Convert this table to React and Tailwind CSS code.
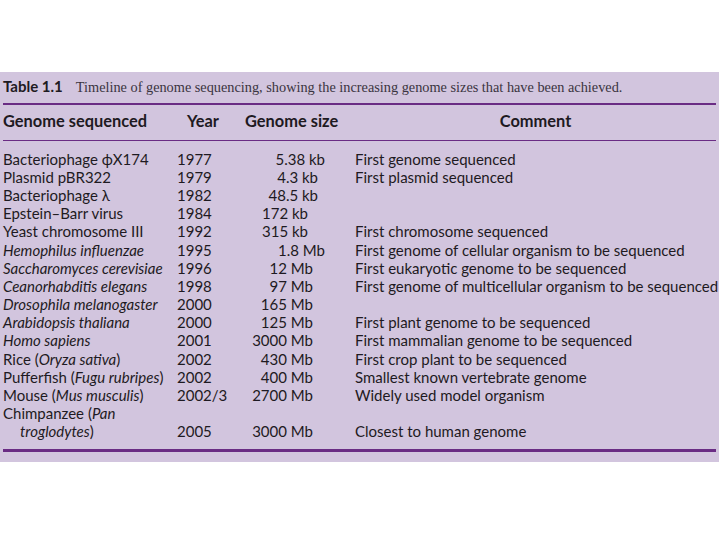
const rows = [
  { name: <>Bacteriophage ϕX174</>, year: '1977', size: '5.38 kb', pr: 'pr-[30px]', comment: 'First genome sequenced' },
  { name: <>Plasmid pBR322</>, year: '1979', size: '4.3 kb', pr: 'pr-[37px]', comment: 'First plasmid sequenced' },
  { name: <>Bacteriophage λ</>, year: '1982', size: '48.5 kb', pr: 'pr-[37px]', comment: '' },
  { name: <>Epstein–Barr virus</>, year: '1984', size: '172 kb', pr: 'pr-[47px]', comment: '' },
  { name: <>Yeast chromosome III</>, year: '1992', size: '315 kb', pr: 'pr-[47px]', comment: 'First chromosome sequenced' },
  { name: <i>Hemophilus influenzae</i>, year: '1995', size: '1.8 Mb', pr: 'pr-[30px]', comment: 'First genome of cellular organism to be sequenced' },
  { name: <i>Saccharomyces cerevisiae</i>, year: '1996', size: '12 Mb', pr: 'pr-[42px]', comment: 'First eukaryotic genome to be sequenced' },
  { name: <i>Ceanorhabditis elegans</i>, year: '1998', size: '97 Mb', pr: 'pr-[42px]', comment: 'First genome of multicellular organism to be sequenced' },
  { name: <i>Drosophila melanogaster</i>, year: '2000', size: '165 Mb', pr: 'pr-[42px]', comment: '' },
  { name: <i>Arabidopsis thaliana</i>, year: '2000', size: '125 Mb', pr: 'pr-[42px]', comment: 'First plant genome to be sequenced' },
  { name: <i>Homo sapiens</i>, year: '2001', size: '3000 Mb', pr: 'pr-[42px]', comment: 'First mammalian genome to be sequenced' },
  { name: <>Rice (<i>Oryza sativa</i>)</>, year: '2002', size: '430 Mb', pr: 'pr-[42px]', comment: 'First crop plant to be sequenced' },
  { name: <>Pufferfish (<i>Fugu rubripes</i>)</>, year: '2002', size: '400 Mb', pr: 'pr-[42px]', comment: 'Smallest known vertebrate genome' },
  { name: <>Mouse (<i>Mus musculis</i>)</>, year: '2002/3', size: '2700 Mb', pr: 'pr-[42px]', comment: 'Widely used model organism' },
]

function Row({ name, year, size, pr, comment }) {
  return (
    <div className="grid h-[18.2px] grid-cols-[174px_56px_122px_1fr] items-center whitespace-nowrap">
      <span>{name}</span>
      <span>{year}</span>
      <span className={`text-right ${pr}`}>{size}</span>
      <span>{comment}</span>
    </div>
  )
}

export default function App() {
  return (
    <div className="h-[540px] w-[720px] bg-white pt-[72px]">
      <div className="flex h-[390px] w-[719px] flex-col bg-[#d2c5de] pl-[3px] pr-[3px] text-[#1e1a22]" style={{ fontFamily: 'Lato, "Open Sans", sans-serif' }}>
        <div className="flex h-[31px] items-end gap-[13px] pb-[9px] whitespace-nowrap">
          <span className="text-[15px] font-bold leading-none">Table 1.1</span>
          <span className="text-[14.3px] leading-none text-[#3a3440]" style={{ fontFamily: '"Liberation Serif", serif' }}>
            Timeline of genome sequencing, showing the increasing genome sizes that have been achieved.
          </span>
        </div>
        <div className="h-[2px] bg-[#6a2c84]" />
        <div className="grid h-[35px] grid-cols-[184px_58px_110px_1fr] items-center pb-[2px] text-[16.4px] font-bold whitespace-nowrap">
          <span>Genome sequenced</span>
          <span>Year</span>
          <span>Genome size</span>
          <span className="text-center">Comment</span>
        </div>
        <div className="h-[1px] bg-[#6a2c84]" />
        <div className="flex flex-col pt-[9px] text-[15px] leading-none">
          {rows.map((r, i) => (
            <Row key={i} {...r} />
          ))}
          <div className="grid h-[18.2px] grid-cols-[174px_1fr] items-center whitespace-nowrap">
            <span>Chimpanzee (<i>Pan</i></span>
          </div>
          <div className="grid h-[18.2px] grid-cols-[174px_56px_122px_1fr] items-center whitespace-nowrap">
            <span className="pl-[17px]"><i>troglodytes</i>)</span>
            <span>2005</span>
            <span className="pr-[42px] text-right">3000 Mb</span>
            <span>Closest to human genome</span>
          </div>
        </div>
        <div className="mt-[8px] h-[3px] bg-[#6a2c84]" />
      </div>
    </div>
  )
}
